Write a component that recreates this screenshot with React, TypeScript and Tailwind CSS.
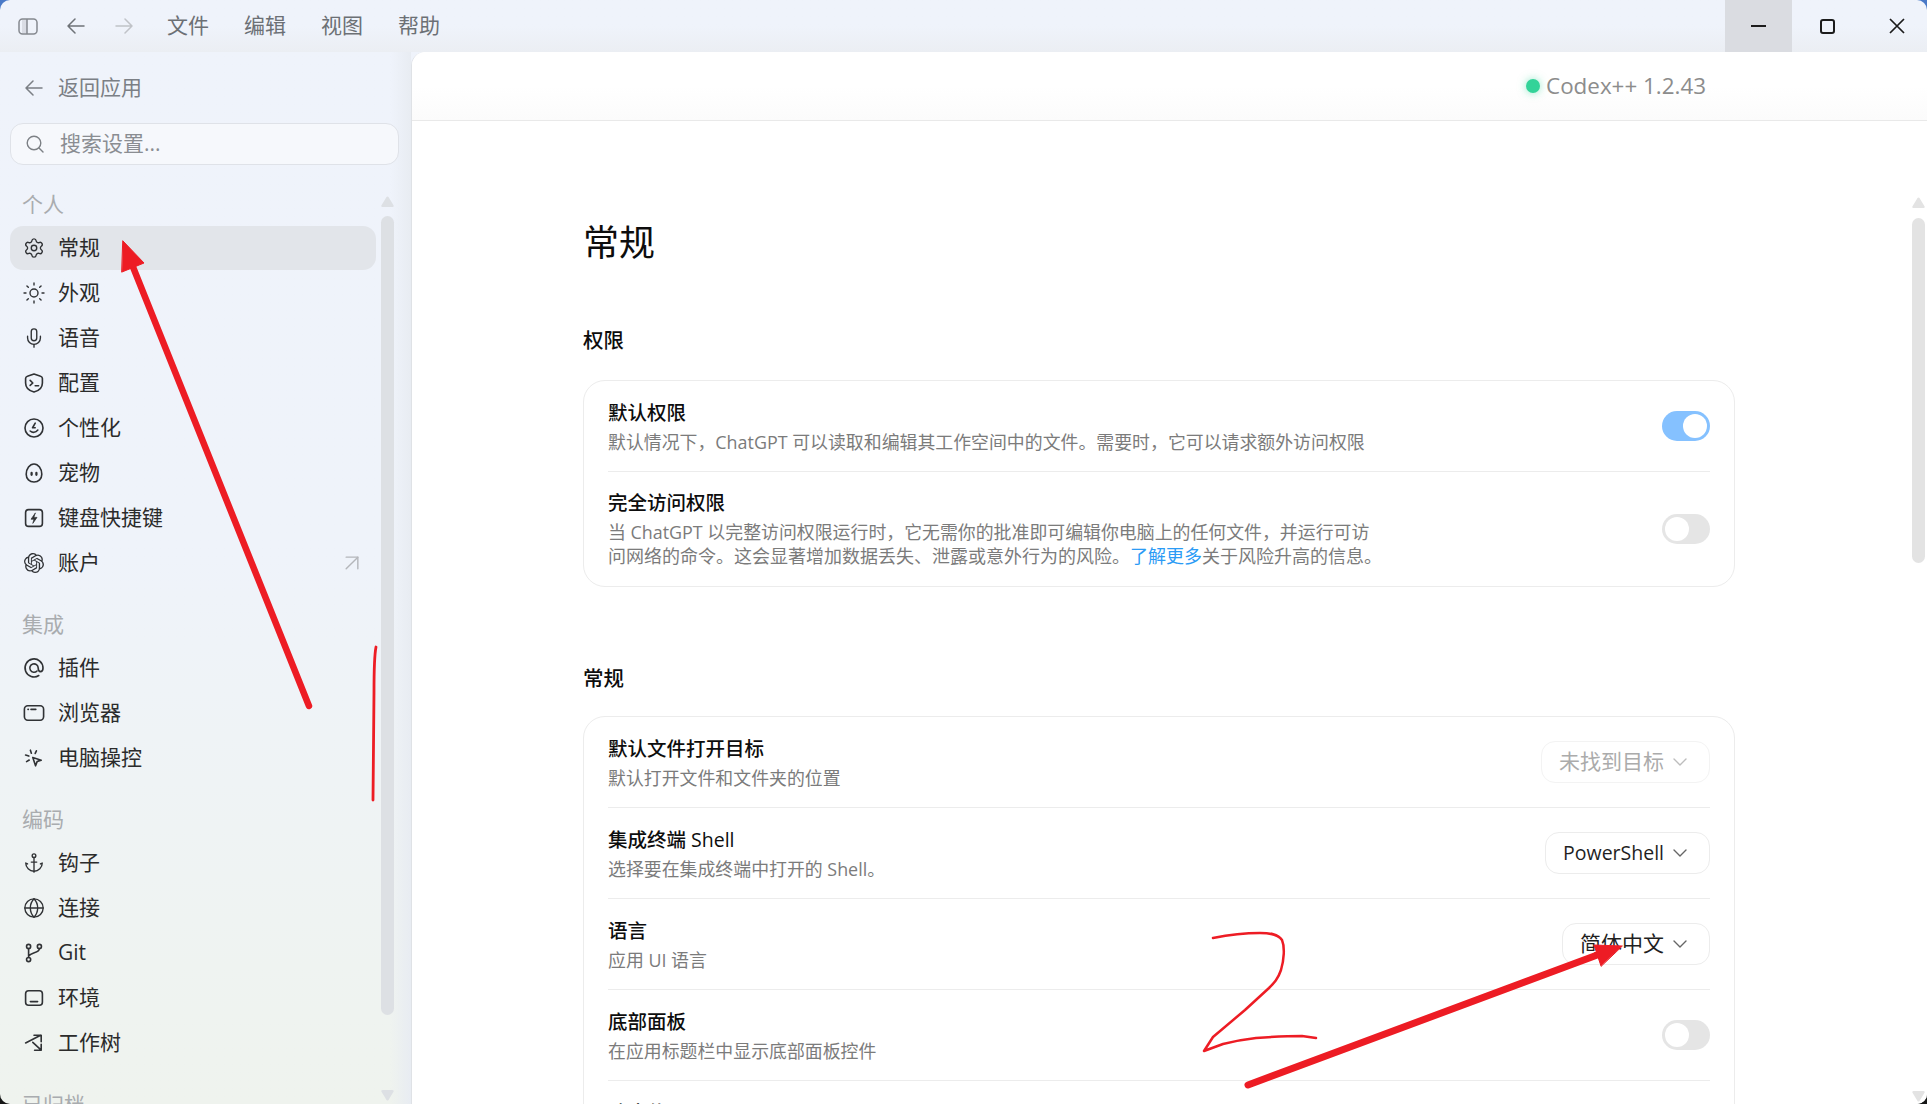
import type { ReactNode } from "react";
import { Anchor, ArrowUpRight, ChevronDown, Globe, Mic, Settings, Sun } from "lucide-react";
import { SiOpenai } from "react-icons/si";

function Ic({ children }: { children: ReactNode }) {
  return (
    <svg viewBox="0 0 20 20" fill="none" stroke="currentColor" strokeWidth="1.35" strokeLinecap="round" strokeLinejoin="round" className="w-6 h-6 shrink-0">
      {children}
    </svg>
  );
}

function BackArrow({ className }: { className: string }) {
  return (
    <svg viewBox="0 0 18 18" fill="none" stroke="currentColor" strokeWidth="1.5" strokeLinecap="round" strokeLinejoin="round" className={className}>
      <path d="M17 9H1M8 2 1 9l7 7" />
    </svg>
  );
}

const shield = (
  <Ic>
    <path d="M10 2.500l5.500 1.800c1 .3 1.500 1 1.500 2V10c0 4-3 6.500-7 7.500-4-1-7-3.500-7-7.500V6.300c0-1 .5-1.700 1.500-2z" />
    <path d="M6.800 7.800 9 10l-2.200 2M11 12.300h2.800" />
  </Ic>
);
const personal = (
  <Ic>
    <circle cx="10" cy="10" r="7.500" />
    <path d="M11 6 8.800 9.800H11M6.800 12.500c2 1.700 4.500 1.500 6.400-.8" />
  </Ic>
);
const pet = (
  <Ic>
    <path d="M10 2.500c3.500 0 6.500 4 6.500 8.500 0 4-2.800 6.500-6.500 6.500S3.500 15 3.500 11c0-4.500 3-8.500 6.500-8.500z" />
    <path d="M8 10v1.500M12 10v1.500" strokeWidth="1.900" />
  </Ic>
);
const keys = (
  <Ic>
    <rect x="3" y="3" width="14" height="14" rx="2.500" />
    <path d="M11 6 7.500 11H10l-1 3.500 3.500-5H10z" fill="currentColor" strokeWidth="0.6" />
  </Ic>
);
const plugin = (
  <Ic>
    <path d="M14 16.300A7.500 7.500 0 1 1 17.500 10c0 1.800-.9 3-2.100 3S13.500 12 13.500 10a3.500 3.500 0 1 0-1 2.500" />
  </Ic>
);
const browser = (
  <Ic>
    <rect x="2" y="4" width="16" height="12" rx="2.800" />
    <path d="M5 7h.3M7.500 7h4" />
  </Ic>
);
const computer = (
  <Ic>
    <path d="M9 9.500l7 2.300-3.400 1.200-1.300 3.500z" />
    <path d="M7 3.500 7.800 6M12 4l-1 2.200M3 7.500l2.700.9M3.800 13l2.200-1.300" />
  </Ic>
);
const git = (
  <Ic>
    <circle cx="5.500" cy="4.500" r="1.700" />
    <circle cx="5.500" cy="15.500" r="1.700" />
    <circle cx="14.500" cy="4.500" r="1.700" />
    <path d="M5.500 6.200v7.600M14.500 6.200c0 4-6.500 3-9 6.300" />
  </Ic>
);
const env = (
  <Ic>
    <rect x="3" y="4" width="14" height="12" rx="2.500" />
    <path d="M7 13h6" />
  </Ic>
);
const worktree = (
  <Ic>
    <path d="M3 10l12.500-6.500M10 3.500h6V9M9 9.500l7 6.500M16 11v5h-5.500" />
  </Ic>
);

const groups: { label: string; items: { name: string; icon: ReactNode; active?: boolean; external?: boolean }[] }[] = [
  {
    label: "个人",
    items: [
      { name: "常规", icon: <Settings size={22} strokeWidth={1.5} className="shrink-0" />, active: true },
      { name: "外观", icon: <Sun size={24} strokeWidth={1.4} className="shrink-0" /> },
      { name: "语音", icon: <Mic size={22} strokeWidth={1.5} className="shrink-0" /> },
      { name: "配置", icon: shield },
      { name: "个性化", icon: personal },
      { name: "宠物", icon: pet },
      { name: "键盘快捷键", icon: keys },
      { name: "账户", icon: <SiOpenai size={20} className="shrink-0" />, external: true },
    ],
  },
  {
    label: "集成",
    items: [
      { name: "插件", icon: plugin },
      { name: "浏览器", icon: browser },
      { name: "电脑操控", icon: computer },
    ],
  },
  {
    label: "编码",
    items: [
      { name: "钩子", icon: <Anchor size={22} strokeWidth={1.5} className="shrink-0" /> },
      { name: "连接", icon: <Globe size={22} strokeWidth={1.5} className="shrink-0" /> },
      { name: "Git", icon: git },
      { name: "环境", icon: env },
      { name: "工作树", icon: worktree },
    ],
  },
  { label: "已归档", items: [] },
];

function ScrollArrow({ down, className }: { down?: boolean; className: string }) {
  return (
    <svg viewBox="0 0 13 11" className={`w-[13px] h-[11px] shrink-0 ${className}`} fill="currentColor">
      <path d={down ? "M1.500 0h10c1 0 1.500 1 1 1.800L7.500 10c-.5.7-1.500.7-2 0L.5 1.800C0 1 .5 0 1.500 0z" : "M5.500 1c.5-.7 1.500-.7 2 0l5 8.200c.5.800 0 1.800-1 1.800h-10c-1 0-1.500-1-1-1.800z"} />
    </svg>
  );
}

function Toggle({ on }: { on?: boolean }) {
  return (
    <div className={`w-12 h-[30px] rounded-full px-[3px] flex items-center ${on ? "bg-[#85c1ff] justify-end" : "bg-[#e5e5e5] justify-start"}`}>
      <div className="w-6 h-6 rounded-full bg-white" />
    </div>
  );
}

function Select({ label, disabled, latin }: { label: string; disabled?: boolean; latin?: boolean }) {
  return (
    <div className={`h-[42px] rounded-[14px] border pl-[17px] pr-[17px] flex items-center gap-[4px] ${latin ? "text-[19.500px]" : "text-[21px]"} ${disabled ? "border-[#f3f3f3] text-[#ababab]" : "border-[#ececec] text-[#1f1f1f]"}`}>
      {label}
      <ChevronDown size={24} strokeWidth={1.4} className={disabled ? "text-[#bdbdbd]" : "text-[#666666]"} />
    </div>
  );
}

function Row({ title, desc, control, last, pt = "pt-[18px]" }: { title: string; desc: ReactNode; control: ReactNode; last?: boolean; pt?: string }) {
  return (
    <div className={`flex items-center justify-between ${last ? "" : "h-[91px] border-b border-[#ececec]"}`}>
      <div className={`self-start ${pt} ${last ? "pb-[18px]" : ""}`}>
        <div className="h-7 leading-7 text-[19.500px] font-medium text-[#0d0d0d]">{title}</div>
        <div className="mt-[3px] leading-6 text-[17.900px] text-[#7b7b7b] whitespace-nowrap">{desc}</div>
      </div>
      {control}
    </div>
  );
}

export default function App() {
  return (
    <div className="relative w-[1927px] h-[1104px] overflow-hidden bg-gradient-to-b from-[#4a7ac8] to-[#161616] font-['Open_Sans','Noto_Sans_CJK_SC',sans-serif]">
      <div className="w-full h-full rounded-[10px] overflow-hidden flex flex-col bg-gradient-to-b from-[#eff3fb] via-[#eff3fa] to-[#eff3ee]">
        <header className="h-[52px] shrink-0 flex items-center bg-gradient-to-b from-transparent via-transparent to-[#ebeef3]">
          <svg viewBox="0 0 20 17" fill="none" stroke="#85898f" strokeWidth="1.500" className="ml-[18px] w-5 h-[17px]">
            <rect x="1" y="1" width="18" height="15" rx="3.500" />
            <path d="M9 1v15" />
            <path d="M4 1.500h5v14H4z" fill="#85898f" fillOpacity="0.2" stroke="none" />
          </svg>
          <BackArrow className="ml-[29px] w-[18px] h-[18px] text-[#6f7378]" />
          <BackArrow className="ml-[30px] w-[18px] h-[18px] text-[#c0c3c8] rotate-180" />
          <nav className="ml-[34px] flex gap-[35px] text-[21px] text-[#6c7075]">
            <span>文件</span>
            <span>编辑</span>
            <span>视图</span>
            <span>帮助</span>
          </nav>
          <div className="ml-auto flex h-full text-[#1c1c1c]">
            <div className="w-[67px] bg-[#dadce1] flex items-center justify-center">
              <div className="w-[15px] h-[2px] bg-[#1c1c1c]" />
            </div>
            <div className="w-[70px] flex items-center justify-center">
              <div className="w-[15px] h-[15px] rounded-[3px] border-2 border-[#1c1c1c]" />
            </div>
            <div className="w-[65px] pl-[5px] flex items-center justify-center">
              <svg viewBox="0 0 16 16" stroke="currentColor" strokeWidth="1.700" className="w-4 h-4">
                <path d="M1 1l14 14M15 1 1 15" />
              </svg>
            </div>
          </div>
        </header>

        <div className="flex flex-1 min-h-0">
          <aside className="w-[411px] shrink-0 flex flex-col bg-gradient-to-r from-transparent via-transparent via-95% to-[#e8ecf2]">
            <div className="mt-[14px] h-11 flex items-center pl-[25px] gap-[15px] text-[21px] text-[#7b7f85]">
              <BackArrow className="w-[18px] h-[18px]" />
              返回应用
            </div>
            <div className="mt-[13px] ml-[10px] w-[389px] h-[42px] shrink-0 rounded-[13px] border border-[#dfe2e8] bg-[#f6f8fc] flex items-center pl-[15px] gap-[16px] text-[21px] text-[#8a8d92]">
              <svg viewBox="0 0 18 18" fill="none" stroke="#7d8186" strokeWidth="1.400" strokeLinecap="round" className="w-[18px] h-[18px]">
                <circle cx="8" cy="8" r="6.800" />
                <path d="M13 13l4 4" />
              </svg>
              搜索设置...
            </div>
            <div className="mt-[21px] flex flex-1 min-h-0">
              <nav className="ml-[10px] w-[366px] shrink-0 flex flex-col gap-[21px]">
                {groups.map((g) => (
                  <section key={g.label}>
                    <h3 className="h-[38px] leading-[37px] pl-[12px] text-[21px] font-normal text-[#a9acaf]">{g.label}</h3>
                    <ul className="mt-[2px] flex flex-col gap-[1px]">
                      {g.items.map((item) => (
                        <li key={item.name} className={`h-11 rounded-[13px] pl-[14px] pr-[10px] flex items-center gap-[14px] text-[21px] text-[#2b2b2b] ${item.active ? "bg-[#e2e5ea]" : ""}`}>
                          <span className="w-5 h-5 flex items-center justify-center text-[#303235]">{item.icon}</span>
                          <span className="flex-1">{item.name}</span>
                          {item.external && <ArrowUpRight size={28} strokeWidth={1.2} className="text-[#b4b6ba]" />}
                        </li>
                      ))}
                    </ul>
                  </section>
                ))}
              </nav>
              <div className="ml-[5px] w-[13px] pt-[10px] flex flex-col text-[#dde0e4]">
                <ScrollArrow className="" />
                <div className="mt-[9px] h-[799px] shrink-0 rounded-full bg-[#dde0e4]" />
                <ScrollArrow down className="mt-[75px]" />
              </div>
            </div>
          </aside>

          <main className="flex-1 min-w-0 flex flex-col bg-white rounded-tl-[14px] border-l border-[#dfe2e6]">
            <div className="h-[69px] shrink-0 border-b border-[#e9e9e9] rounded-tl-[14px] bg-gradient-to-b from-white via-white to-[#fbfbfb] flex items-center justify-end pr-[221px]">
              <span className="w-[14px] h-[14px] rounded-full bg-[#33d399] shadow-[0_0_8px_rgba(52,211,153,0.55)]" />
              <span className="ml-[6px] text-[22.400px] text-[#8c8c8c]">Codex++ 1.2.43</span>
            </div>
            <div className="flex flex-1 min-h-0">
              <div className="pl-[171px] w-[1323px]">
                <h1 className="mt-[96px] h-[52px] leading-[52px] text-[36px] font-normal text-[#0d0d0d]">常规</h1>
                <h2 className="mt-[57px] h-7 leading-7 text-[20.500px] font-medium text-[#0d0d0d]">权限</h2>
                <div className="mt-[26px] w-[1152px] rounded-[22px] border border-[#ececec] px-6">
                  <Row title="默认权限" desc="默认情况下，ChatGPT 可以读取和编辑其工作空间中的文件。需要时，它可以请求额外访问权限" control={<Toggle on />} />
                  <Row
                    last
                    pt="pt-[17px]"
                    title="完全访问权限"
                    desc={
                      <>
                        当 ChatGPT 以完整访问权限运行时，它无需你的批准即可编辑你电脑上的任何文件，并运行可访
                        <br />
                        <span className="text-[18px]">
                          问网络的命令。这会显著增加数据丢失、泄露或意外行为的风险。
                          <span className="text-[#2b9bf5]">了解更多</span>
                          关于风险升高的信息。
                        </span>
                      </>
                    }
                    control={<Toggle />}
                  />
                </div>
                <h2 className="mt-[77px] h-7 leading-7 text-[20.500px] font-medium text-[#0d0d0d]">常规</h2>
                <div className="mt-[24px] w-[1152px] rounded-[22px] border border-[#ececec] px-6">
                  <Row title="默认文件打开目标" desc="默认打开文件和文件夹的位置" control={<Select label="未找到目标" disabled />} />
                  <Row title="集成终端 Shell" desc="选择要在集成终端中打开的 Shell。" control={<Select label="PowerShell" latin />} />
                  <Row title="语言" desc="应用 UI 语言" control={<Select label="简体中文" />} />
                  <Row title="底部面板" desc="在应用标题栏中显示底部面板控件" control={<Toggle />} />
                  <Row title="防止休眠" desc="在运行任务时保持电脑唤醒" control={<Toggle />} />
                </div>
              </div>
              <div className="ml-auto mr-[2px] w-[13px] pt-[76px] flex flex-col text-[#e3e3e3]">
                <ScrollArrow className="" />
                <div className="mt-[10px] h-[345px] shrink-0 rounded-full bg-[#e3e3e3]" />
                <ScrollArrow down className="mt-[528px]" />
              </div>
            </div>
          </main>
        </div>
      </div>

      {/* 截图上的红色批注 */}
      <svg viewBox="0 0 1927 1104" className="absolute inset-0 w-full h-full pointer-events-none" fill="none" stroke="#ed1c24" strokeLinecap="round" strokeLinejoin="round">
        <path d="M309 706 131 262" strokeWidth="6.500" />
        <path d="M123 241l21 22-22 9z" fill="#ed1c24" strokeWidth="1" />
        <path d="M376 647c-2 10-2 25-2 45l-1 108" strokeWidth="2.800" />
        <path d="M1213 938c15-3 32-5 47-5 10 0 18 1 22 7 3 7 2 20-1 30-3 9-7 13-12 18l-24 22-32 27-9 14 19-7c12-3 24-5 33-6 14-1 30-2 46-2l14 2" strokeWidth="2.500" />
        <path d="M1248 1085 1608 951" strokeWidth="7" />
        <path d="M1622 946l-28-1 7 21z" fill="#ed1c24" strokeWidth="1" />
      </svg>
    </div>
  );
}
